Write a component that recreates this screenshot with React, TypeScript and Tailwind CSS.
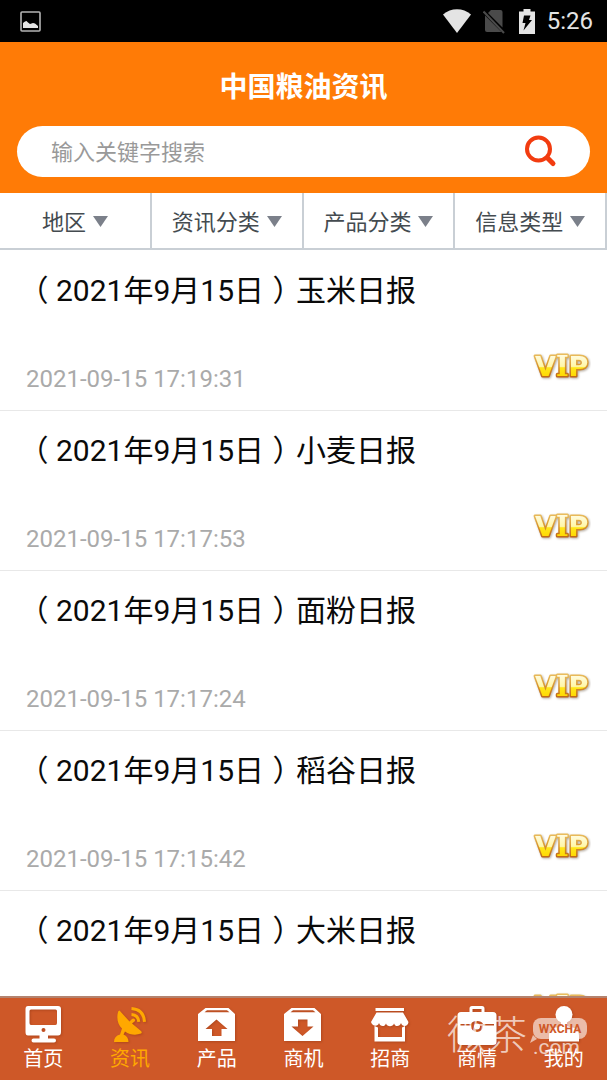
import type { ReactNode } from "react";

const filters = ["地区", "资讯分类", "产品分类", "信息类型"];

const articles = [
  { name: "玉米日报", time: "2021-09-15 17:19:31" },
  { name: "小麦日报", time: "2021-09-15 17:17:53" },
  { name: "面粉日报", time: "2021-09-15 17:17:24" },
  { name: "稻谷日报", time: "2021-09-15 17:15:42" },
  { name: "大米日报", time: "" },
];

function StatusBar() {
  return (
    <div className="flex h-[42px] shrink-0 items-center gap-3 bg-black pl-5 pr-[14px] text-[#e4e4e4]">
      <svg width="21" height="21" viewBox="0 0 21 21" className="mr-auto">
        <rect x="1" y="1" width="19" height="19" rx="1" fill="none" stroke="#b4b4b4" strokeWidth="1.6" />
        <path d="M3 17V12L5 10.5L6.5 10L8 11.5L10 13L13 12L15 12.5L18 15V17Z" fill="#e4e4e4" />
      </svg>
      <svg width="28" height="24" viewBox="0 0 28 24">
        <path d="M0 5.5C8-1.5 20-1.5 28 5.5L14 24Z" fill="currentColor" />
      </svg>
      <svg width="24" height="26" viewBox="0 0 24 26">
        <path d="M8 2H17.5Q19.5 2 19.5 4V19.5L5 5Z" fill="#4a4a4a" />
        <path d="M2 7.5L18.500 24H4Q2 24 2 22Z" fill="#4a4a4a" />
        <path d="M0.500 3.500L21 25" stroke="#4a4a4a" strokeWidth="2" />
      </svg>
      <svg width="16" height="25" viewBox="0 0 16 25">
        <path d="M4.5 0H11.5V2.5H16V25H0V2.5H4.5Z" fill="currentColor" />
        <path d="M5 6.5H11.5L10 11H13L4.5 21.5L6.5 14H3.5Z" fill="#000" />
      </svg>
      <span className="text-[24px] leading-6">5:26</span>
    </div>
  );
}

function VipBadge() {
  return (
    <svg width="60" height="32" viewBox="0 0 60 32" role="img" aria-label="VIP" className="shrink-0">
      <defs>
        <linearGradient id="vipFill" x1="0" y1="4" x2="0" y2="26" gradientUnits="userSpaceOnUse">
          <stop offset="0" stopColor="#fffbe0" />
          <stop offset="0.52" stopColor="#fff6a8" />
          <stop offset="0.58" stopColor="#ffe61a" />
          <stop offset="1" stopColor="#ffd800" />
        </linearGradient>
        <linearGradient id="vipEdge" x1="0" y1="2" x2="0" y2="27" gradientUnits="userSpaceOnUse">
          <stop offset="0" stopColor="#ecc263" />
          <stop offset="0.5" stopColor="#d9962f" />
          <stop offset="1" stopColor="#bd6414" />
        </linearGradient>
      </defs>
      <text
        x="4"
        y="25"
        fontSize="27"
        fontWeight="700"
        fill="url(#vipFill)"
        stroke="url(#vipEdge)"
        strokeWidth="3"
        strokeLinejoin="round"
        className="[font-family:'DejaVu_Sans',sans-serif] [paint-order:stroke] drop-shadow-[1px_1px_1px_rgba(90,70,50,0.45)]"
      >
        V<tspan className="[font-family:'DejaVu_Serif',serif]">I</tspan>P
      </text>
    </svg>
  );
}

interface NavIconProps {
  children: ReactNode;
}

function NavIcon({ children }: NavIconProps) {
  return (
    <svg width="40" height="40" viewBox="0 0 40 40" fill="currentColor" className="drop-shadow-[1px_1px_1px_rgba(120,40,10,0.35)]">
      {children}
    </svg>
  );
}

const boxBody = "M8.5 2H31.5L38 8V35H1V8ZM10 4.3L7.5 6.3H32.5L30 4.3Z";

const tabs = [
  {
    label: "首页",
    icon: (
      <path
        fillRule="evenodd"
        d="M5 0H35Q38 0 38 3V26Q38 29.500 35 29.500H25V32.500H31Q33 32.500 33 34.500Q33 36.500 31 36.500H10.500Q8.500 36.500 8.500 34.500Q8.500 32.500 10.500 32.500H16.500V29.500H5Q2.500 29.500 2.500 26V3Q2.500 0 5 0ZM8 3.500Q6.500 3.500 6.500 5V17Q6.500 19 8 19H32.500Q34 19 34 17V5Q34 3.500 32.500 3.500ZM20.500 22A2 2 0 1 0 20.500 26A2 2 0 1 0 20.500 22Z"
      />
    ),
  },
  {
    label: "资讯",
    icon: (
      <>
        <path d="M9.500 4.500Q8 4.500 7.800 7C6.500 13 8 19 12 22.500L10 28.500C6 29.500 4 32 4 36H18.500C18.500 32.500 17 30 13.500 28.500L15 25.500C20 29 26 29.500 31 27.500Q32.500 26.500 31 25L22 17.500L24.500 15.500A1.500 1.500 0 0 0 22 13L19.500 15.500Z" />
        <path d="M21.500 8.500C26 8.800 28.500 11.500 28.800 15.800" fill="none" stroke="currentColor" strokeWidth="3" />
        <path d="M21.500 2.500C30 3 34 8 34.500 15.800" fill="none" stroke="currentColor" strokeWidth="3" />
      </>
    ),
  },
  {
    label: "产品",
    icon: <path fillRule="evenodd" d={boxBody + "M19.500 13.500L30.500 23H24.500V30H15V23H8.500Z"} />,
  },
  {
    label: "商机",
    icon: <path fillRule="evenodd" d={boxBody + "M15 13.500H24.500V20.500H30.500L19.500 30L8.500 20.500H15Z"} />,
  },
  {
    label: "招商",
    icon: (
      <>
        <path d="M5.500 2H34V5H5.500Z" />
        <path d="M6.500 6.500H33L38.500 16C38 21 32 21 31 17C30 21 25 21 24 17.500C23 21 17 21 16 17.500C15 21 10 21 9 17C8 21 2 20.500 1 16Z" />
        <path fillRule="evenodd" d="M4.500 20L8 21.500V31H32V21.500L35 20V35.500H4.500Z" />
      </>
    ),
  },
  {
    label: "商情",
    icon: (
      <path
        fillRule="evenodd"
        d="M12.500 6V2.500Q12.500 0 15 0H25Q27.500 0 27.500 2.500V6H36Q39.500 6 39.500 9.500V36Q39.500 39 36 39H4Q0.500 39 0.500 36V9.500Q0.500 6 4 6ZM15.500 6H24.500V3H15.500ZM3 18V19.500H14C14 28 26 28 26 19.500H37V18H26C25 14 15 14 14 18ZM20 17.500A3 3 0 1 1 20 23.500A3 3 0 1 1 20 17.500Z"
      />
    ),
  },
  {
    label: "我的",
    icon: (
      <>
        <circle cx="20" cy="8.500" r="8.500" />
        <path d="M5 35.500V30C5 24 8 21.500 13 21.500L17 20V16H23V20L27 21.500C32 21.500 35 24 35 30V35.500Z" />
      </>
    ),
  },
];

function Watermark() {
  return (
    <div
      aria-hidden="true"
      className="pointer-events-none absolute right-5 top-5 flex items-start gap-[6px] text-white/70"
    >
      <span className="text-[40px] font-light leading-9">微茶</span>
      <div className="flex w-[54px] flex-col">
        <span className="relative flex h-[21px] items-center justify-center rounded-lg bg-white/60 text-[12px] font-bold text-[#ce5828]">
          WXCHA
          <svg width="8" height="8" viewBox="0 0 8 8" className="absolute -bottom-1 -left-1">
            <path d="M4 0L8 4L1 8Z" fill="#fff" fillOpacity="0.6" />
          </svg>
        </span>
        <span className="text-[21px] leading-4">.com</span>
      </div>
    </div>
  );
}

export default function App() {
  return (
    <div className="flex h-screen flex-col overflow-hidden bg-white [font-family:Roboto,'Noto_Sans_CJK_SC',sans-serif]">
      <StatusBar />

      <header className="shrink-0 bg-[#ff7b06] px-[17px] pb-4 pt-7">
        <h1 className="text-center text-[28px] font-bold leading-[36px] text-white">中国粮油资讯</h1>
        <form className="mt-5 flex h-[51px] items-center rounded-full bg-white pl-[34px] pr-8">
          <input
            type="search"
            aria-label="搜索"
            placeholder="输入关键字搜索"
            className="min-w-0 flex-1 bg-transparent pt-[2px] text-[22px] leading-8 outline-none placeholder:text-[#999]"
          />
          <button type="button" aria-label="搜索">
            <svg width="34" height="34" viewBox="0 0 34 34" fill="none" stroke="#f23c10">
              <circle cx="14.500" cy="14" r="11.500" strokeWidth="4" />
              <path d="M23.500 23L29 28.500" strokeWidth="5" strokeLinecap="round" />
            </svg>
          </button>
        </form>
      </header>

      <div className="grid h-[57px] shrink-0 grid-cols-4 border-b-2 border-[#c9cfd5]">
        {filters.map((name) => (
          <label key={name} className="flex items-center justify-center gap-[6px] border-r-2 border-[#c9cfd5] pt-1">
            <select aria-label={name} className="appearance-none bg-transparent text-[22px] leading-8 text-[#444b50] outline-none">
              <option>{name}</option>
            </select>
            <svg width="15" height="15" viewBox="0 0 15 15">
              <path d="M0 1H15L7.500 12Z" fill="#7b808a" />
            </svg>
          </label>
        ))}
      </div>

      <ul className="min-h-0 flex-1 overflow-hidden pt-px">
        {articles.map((article) => (
          <li key={article.name} className="h-40 border-b border-[#e8e8e8] pl-[26px] pr-4 pt-5">
            <a href="#" className="block text-[30px] leading-10 text-[#0a0a0a]">
              <span className="inline-block w-[30px] text-center [font-feature-settings:'halt']">（</span>
              2021年9月15日
              <span className="inline-block w-8 text-center [font-feature-settings:'halt']">）</span>
              {article.name}
            </a>
            <div className="mt-10 flex items-start justify-between">
              <time className="pt-4 text-[24px] leading-6 text-[#aaa]">{article.time}</time>
              <VipBadge />
            </div>
          </li>
        ))}
      </ul>

      <nav className="relative grid shrink-0 grid-cols-7 border-t-2 border-[#b3836f] bg-[#ce5828] pb-[7px] pt-2">
        {tabs.map((tab) => (
          <a
            key={tab.label}
            href="#"
            className={
              tab.label === "资讯"
                ? "flex flex-col items-center text-[#ffa800]"
                : "flex flex-col items-center text-white"
            }
          >
            <NavIcon>{tab.icon}</NavIcon>
            <span className="text-[20px] leading-[27px]">{tab.label}</span>
          </a>
        ))}
        <Watermark />
      </nav>
    </div>
  );
}
